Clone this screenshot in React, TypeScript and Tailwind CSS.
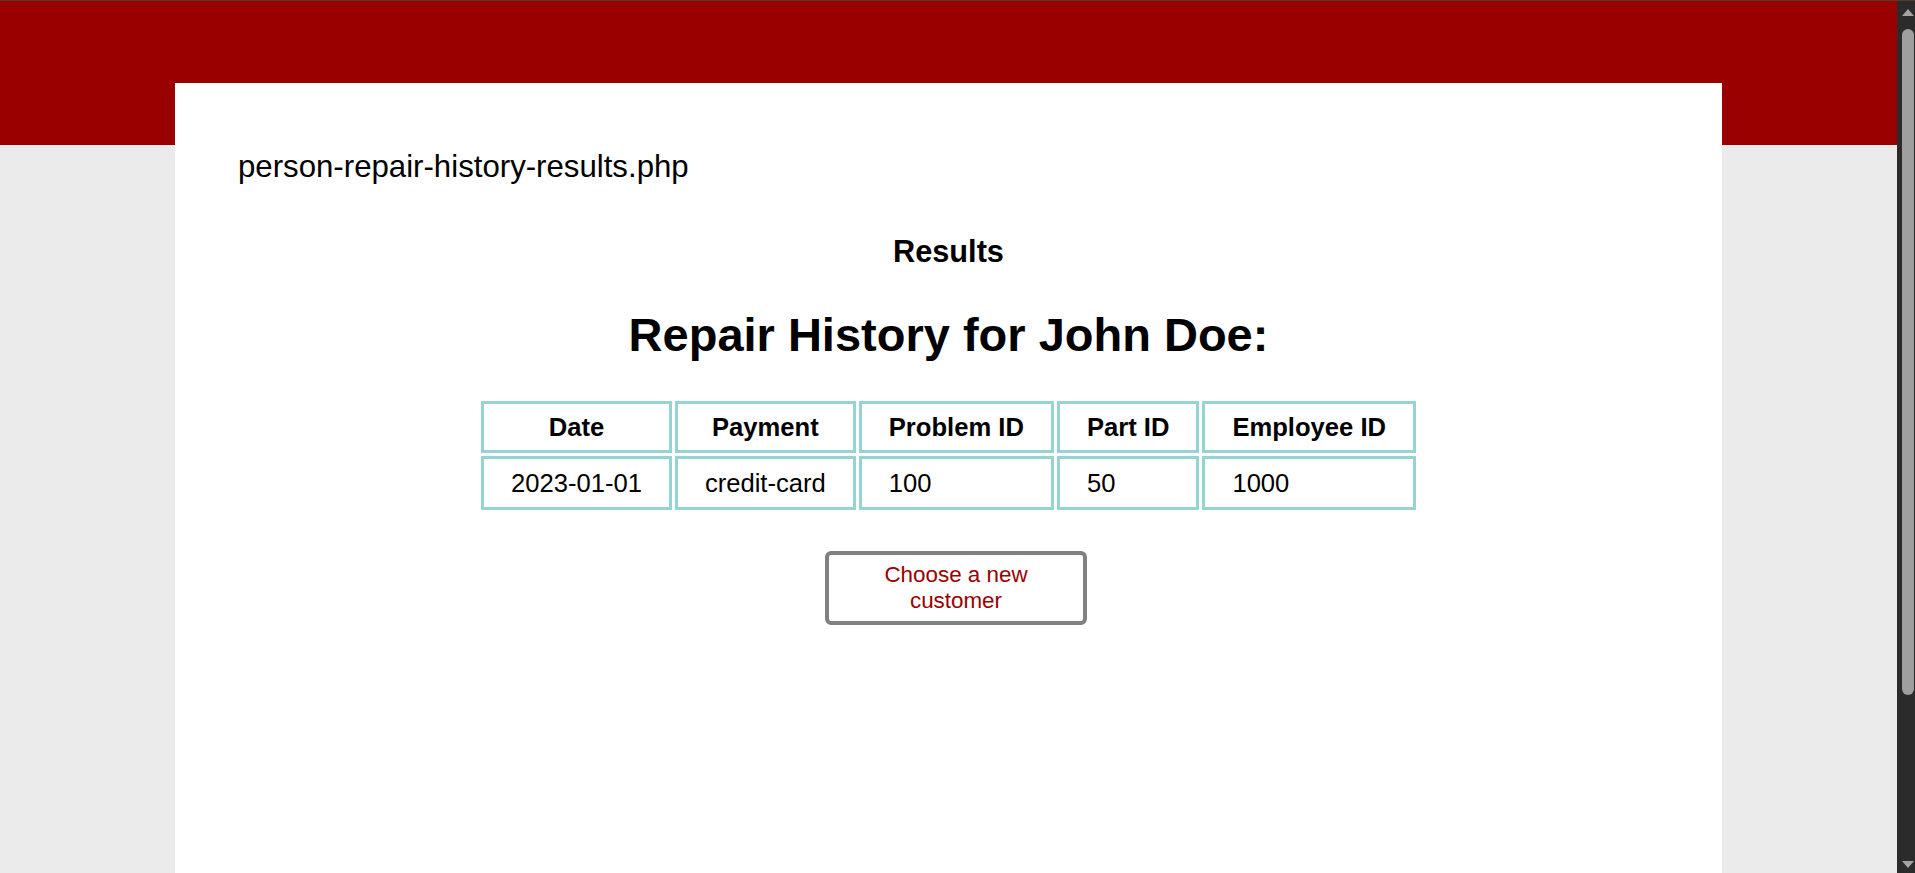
const headers = ["Date", "Payment", "Problem ID", "Part ID", "Employee ID"];
const rows = [["2023-01-01", "credit-card", "100", "50", "1000"]];

function FakeScrollbar() {
  return (
    <div className="w-[18px] shrink-0 bg-[#2b2b2b] pl-[5px] pr-[1px] flex flex-col">
      <div className="h-[28px] pt-[8px]">
        <svg width="12" height="7" viewBox="0 0 12 7">
          <path d="M6 0 L12 7 L0 7 Z" fill="#a3a3a3" />
        </svg>
      </div>
      <div className="h-[666px] rounded-[6px] bg-[#9f9f9f]" />
      <div className="flex-1" />
      <div className="h-[12px]">
        <svg width="12" height="7" viewBox="0 0 12 7">
          <path d="M0 0 L12 0 L6 7 Z" fill="#a3a3a3" />
        </svg>
      </div>
    </div>
  );
}

export default function App() {
  return (
    <div className="h-screen flex overflow-hidden bg-[#ecebec] text-black font-['Liberation_Sans',Arial,sans-serif] border-t border-[#4f3a2c]">
      <div className="flex-1 flex flex-col">
        <div className="h-[144px] shrink-0 bg-[#990000]" />
        <main className="mx-auto -mt-[62px] w-[1547px] flex-1 bg-white pt-[66px] pl-[63px]">
          <p className="text-[31.2px] leading-[36px]">person-repair-history-results.php</p>

          <div className="-ml-[63px] text-center">
            <h3 className="mt-[50px] text-[30.7px] leading-[34px] font-bold">Results</h3>
            <h1 className="mt-[39px] text-[47px] leading-[54px] font-bold">
              Repair History for John Doe:
            </h1>
          </div>

          <div className="-ml-[63px] mt-[36px] flex justify-center">
            <table className="border-separate border-spacing-[3px] text-[25.6px]">
              <thead>
                <tr>
                  {headers.map((h) => (
                    <th
                      key={h}
                      className="border-[3px] border-[#96d3d3] px-[27px] py-[9px] leading-[28px] font-bold text-center"
                    >
                      {h}
                    </th>
                  ))}
                </tr>
              </thead>
              <tbody>
                {rows.map((row, i) => (
                  <tr key={i}>
                    {row.map((cell, j) => (
                      <td
                        key={j}
                        className="border-[3px] border-[#96d3d3] px-[27px] py-[9px] leading-[30px] text-left"
                      >
                        {cell}
                      </td>
                    ))}
                  </tr>
                ))}
              </tbody>
            </table>
          </div>

          <div className="-ml-[63px] mt-[38px] flex justify-center pl-[15px]">
            <button className="w-[262px] h-[74px] rounded-[6px] border-[4px] border-[#808080] bg-white px-[14px] text-[22.4px] leading-[26px] text-[#990000]">
              Choose a new customer
            </button>
          </div>
        </main>
      </div>
      <FakeScrollbar />
    </div>
  );
}
